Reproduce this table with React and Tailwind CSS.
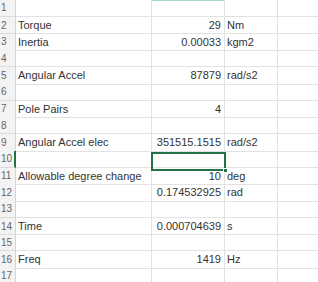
const rows = [
  { a: '', b: '', c: '' },
  { a: 'Torque', b: '29', c: 'Nm' },
  { a: 'Inertia', b: '0.00033', c: 'kgm2' },
  { a: '', b: '', c: '' },
  { a: 'Angular Accel', b: '87879', c: 'rad/s2' },
  { a: '', b: '', c: '' },
  { a: 'Pole Pairs', b: '4', c: '' },
  { a: '', b: '', c: '' },
  { a: 'Angular Accel elec', b: '351515.1515', c: 'rad/s2' },
  { a: '', b: '', c: '', active: true },
  { a: 'Allowable degree change', b: '10', c: 'deg' },
  { a: '', b: '0.174532925', c: 'rad' },
  { a: '', b: '', c: '' },
  { a: 'Time', b: '0.000704639', c: 's' },
  { a: '', b: '', c: '' },
  { a: 'Freq', b: '1419', c: 'Hz' },
  { a: '', b: '', c: '' },
];

const Row = ({ n, row }) => (
  <div className="grid grid-cols-[16px_136px_73px_53px_1fr] h-[16.75px] shrink-0">
    <div
      className={
        'flex items-center pl-[1px] text-[10px] text-[#666] bg-[#f3f3f3] border-b border-[#dcdcdc] ' +
        (row.active ? 'border-r-2 border-r-[#217346] bg-[#e4e4e4]' : 'border-r border-r-[#d4d4d4]')
      }
    >
      {n}
    </div>
    <div className="flex items-center pl-[2px] border-r border-b border-[#e2e2e2] whitespace-nowrap overflow-visible">
      {row.a}
    </div>
    <div
      className={
        'relative flex items-center justify-end pr-[3px] border-r border-b border-[#e2e2e2] ' +
        (n === 1 ? 'border-t border-t-[#a6dcc0]' : '')
      }
    >
      {row.b}
      {row.active && (
        <div className="absolute left-[-1px] top-[1px] w-[75px] h-[19px] border-2 border-[#217346] z-10">
          <div className="absolute right-[-4px] bottom-[-4px] w-[5px] h-[5px] bg-[#217346] border border-white" />
        </div>
      )}
    </div>
    <div className="flex items-center pl-[2px] border-r border-b border-[#e2e2e2] whitespace-nowrap">
      {row.c}
    </div>
    <div className="border-b border-[#e2e2e2]" />
  </div>
);

export default function App() {
  return (
    <div className="w-[318px] h-[282px] overflow-hidden bg-white flex flex-col text-[11px] text-[#333] font-['Liberation_Sans',sans-serif]">
      {rows.map((row, i) => (
        <Row key={i} n={i + 1} row={row} />
      ))}
    </div>
  );
}
